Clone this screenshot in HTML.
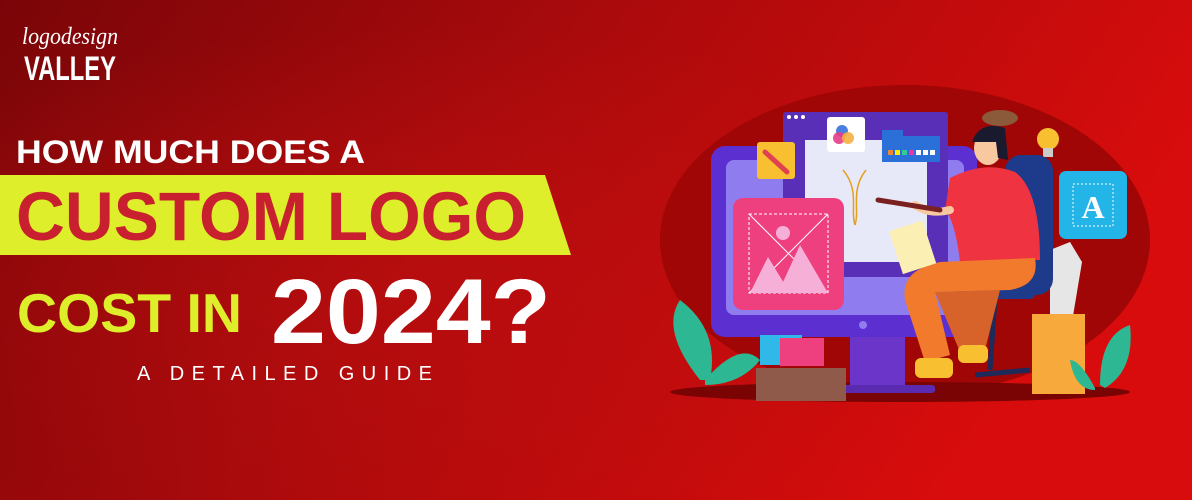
<!DOCTYPE html>
<html><head><meta charset="utf-8"><style>
html,body{margin:0;padding:0}
body{width:1192px;height:500px;overflow:hidden;background:#a00}
</style></head><body>
<svg width="1192" height="500" viewBox="0 0 1192 500" xmlns="http://www.w3.org/2000/svg" style="display:block">
<defs>
<linearGradient id="bg" x1="0" y1="0" x2="1" y2="0.3">
<stop offset="0" stop-color="#7a0508"/><stop offset="0.45" stop-color="#a80a0c"/><stop offset="1" stop-color="#d80c0c"/>
</linearGradient>
<radialGradient id="gl" cx="0.35" cy="0.55" r="0.5">
<stop offset="0" stop-color="#c41010" stop-opacity="0.5"/><stop offset="1" stop-color="#c41010" stop-opacity="0"/>
</radialGradient>
</defs>
<rect width="1192" height="500" fill="url(#bg)"/>
<rect width="1192" height="500" fill="url(#gl)"/>
<ellipse cx="905" cy="240" rx="245" ry="155" fill="#a00606"/>
<!-- logo -->
<text x="22" y="44" font-family="Liberation Serif, serif" font-style="italic" font-size="24" fill="#fff" textLength="96" lengthAdjust="spacingAndGlyphs">logodesign</text>
<text x="24" y="80" font-family="Liberation Sans, sans-serif" font-weight="bold" font-size="34" fill="#fff" textLength="92" lengthAdjust="spacingAndGlyphs">VALLEY</text>
<!-- headline -->
<text x="16" y="163" font-family="Liberation Sans, sans-serif" font-weight="bold" font-size="32" fill="#fff" textLength="349" lengthAdjust="spacingAndGlyphs">HOW MUCH DOES A</text>
<polygon points="0,175 545,175 571,255 0,255" fill="#dfee2a"/>
<text x="16" y="240" font-family="Liberation Sans, sans-serif" font-weight="bold" font-size="69" fill="#c8202e" textLength="510" lengthAdjust="spacingAndGlyphs">CUSTOM LOGO</text>
<text x="17" y="332" font-family="Liberation Sans, sans-serif" font-weight="bold" font-size="55" fill="#dfee2a" textLength="225" lengthAdjust="spacingAndGlyphs">COST IN</text>
<text x="271" y="343" font-family="Liberation Sans, sans-serif" font-weight="bold" font-size="92" fill="#fff" textLength="280" lengthAdjust="spacingAndGlyphs">2024?</text>
<text x="137" y="380" font-family="Liberation Sans, sans-serif" font-size="20" fill="#fff" textLength="295" lengthAdjust="spacing">A DETAILED GUIDE</text>

<ellipse cx="900" cy="392" rx="230" ry="10" fill="#7a0404"/>
<!-- monitor stand -->
<rect x="850" y="330" width="55" height="62" fill="#6a35c8"/>
<rect x="820" y="385" width="115" height="8" rx="3" fill="#5a2bb0"/>
<!-- monitor -->
<rect x="711" y="146" width="266" height="191" rx="14" fill="#5b2fd0"/>
<rect x="726" y="160" width="238" height="155" rx="8" fill="#8f7df0"/>
<circle cx="863" cy="325" r="4" fill="#8f7df0"/>
<!-- window -->
<rect x="783" y="112" width="165" height="165" rx="3" fill="#5a2fb8"/>
<circle cx="789" cy="117" r="2" fill="#fff"/><circle cx="796" cy="117" r="2" fill="#fff"/><circle cx="803" cy="117" r="2" fill="#fff"/>
<rect x="805" y="140" width="122" height="122" fill="#e8e9f8"/>
<rect x="827" y="117" width="38" height="35" rx="3" fill="#fff"/>
<circle cx="842" cy="131" r="6" fill="#4a7fe0"/><circle cx="839" cy="138" r="6" fill="#e83c8a" opacity="0.9"/><circle cx="848" cy="138" r="6" fill="#f5b040" opacity="0.9"/>
<rect x="882" y="130" width="58" height="32" fill="#2a70d8"/>
<rect x="903" y="130" width="37" height="6" fill="#5a2fb8"/>
<rect x="888" y="150" width="5" height="5" fill="#e83"/><rect x="895" y="150" width="5" height="5" fill="#fe0"/><rect x="902" y="150" width="5" height="5" fill="#3c9"/><rect x="909" y="150" width="5" height="5" fill="#e3a"/><rect x="916" y="150" width="5" height="5" fill="#fff"/><rect x="923" y="150" width="5" height="5" fill="#fff"/><rect x="930" y="150" width="5" height="5" fill="#fff"/>
<rect x="757" y="142" width="38" height="37" rx="3" fill="#f8c030"/>
<path d="M765 152 L787 172" stroke="#e04050" stroke-width="5" stroke-linecap="round"/>
<path d="M843 170 C860 190 850 210 855 225 M866 170 C850 190 860 210 855 225" stroke="#e0a020" stroke-width="1.5" fill="none"/>
<!-- pink card -->
<rect x="733" y="198" width="111" height="112" rx="10" fill="#ee3f7e"/>
<rect x="749" y="214" width="79" height="79" fill="none" stroke="#fff" stroke-dasharray="3 2"/>
<path d="M749 214 L828 293 M828 214 L749 293" stroke="#fff" stroke-width="1"/>
<circle cx="783" cy="233" r="7" fill="#f6b0d8"/>
<polygon points="750,293 768,257 790,293" fill="#f6b0d8"/><polygon points="778,293 800,245 828,293" fill="#f6b0d8"/>
<!-- A card -->
<rect x="1059" y="171" width="68" height="68" rx="7" fill="#23b5e8"/>
<rect x="1073" y="184" width="40" height="42" fill="none" stroke="#fff" stroke-dasharray="2 2"/>
<text x="1093" y="218" text-anchor="middle" font-family="Liberation Serif, serif" font-weight="bold" font-size="32" fill="#fff">A</text>
<circle cx="1048" cy="139" r="11" fill="#f8c030"/><rect x="1043" y="148" width="10" height="9" fill="#ccc"/>
<!-- rolls & pot -->
<path d="M1050 250 l20 -8 l12 20 l-10 60 l-22 0 Z" fill="#e6e6e6"/>
<!-- chair -->
<rect x="1005" y="155" width="48" height="140" rx="16" fill="#1e3a8a"/>
<rect x="955" y="285" width="80" height="14" rx="5" fill="#1e3a8a"/>
<path d="M995 299 L990 370 M975 375 L1030 370" stroke="#1e2a5a" stroke-width="5"/>
<rect x="1032" y="314" width="53" height="80" fill="#f7a93c"/>
<!-- character -->
<path d="M950 178 Q985 160 1015 172 Q1040 190 1040 260 L960 262 Q955 220 945 210 Z" fill="#ef3340"/>
<path d="M1035 258 Q1040 285 1010 290 L935 292 L950 355 L925 362 L905 300 Q900 270 940 262 Z" fill="#f27a2c"/>
<path d="M935 292 L1000 290 L985 350 L960 352 Z" fill="#d8632a"/>
<rect x="915" y="358" width="38" height="20" rx="6" fill="#f8c030"/>
<rect x="958" y="345" width="30" height="18" rx="6" fill="#f8c030"/>
<ellipse cx="988" cy="148" rx="14" ry="17" fill="#f8c8a0"/>
<path d="M972 142 Q980 120 1005 128 L1008 160 L998 158 L996 142 Z" fill="#1a1a2e"/>
<ellipse cx="1000" cy="118" rx="18" ry="8" fill="#8a5a3a"/>
<path d="M950 210 Q930 215 915 205" stroke="#f8c8a0" stroke-width="8" stroke-linecap="round" fill="none"/>
<path d="M878 200 L940 210" stroke="#7a2020" stroke-width="5" stroke-linecap="round"/>
<rect x="895" y="225" width="35" height="45" fill="#fbefb4" transform="rotate(-18 912 247)"/>
<!-- photo box -->
<rect x="760" y="335" width="42" height="30" fill="#30b8e8"/><rect x="780" y="338" width="44" height="28" fill="#ee3f7e"/>
<rect x="756" y="368" width="90" height="33" fill="#8f5a4a"/>
<!-- plants -->
<path d="M700 380 Q660 330 680 300 Q720 330 710 380 Z" fill="#2db893"/>
<path d="M705 380 Q740 340 760 360 Q740 385 705 385 Z" fill="#2db893"/>
<path d="M1100 385 Q1100 335 1130 325 Q1135 370 1105 388 Z" fill="#2db893"/>
<path d="M1095 388 Q1080 360 1070 360 Q1075 390 1095 390 Z" fill="#2db893"/>
</svg>
</body></html>
